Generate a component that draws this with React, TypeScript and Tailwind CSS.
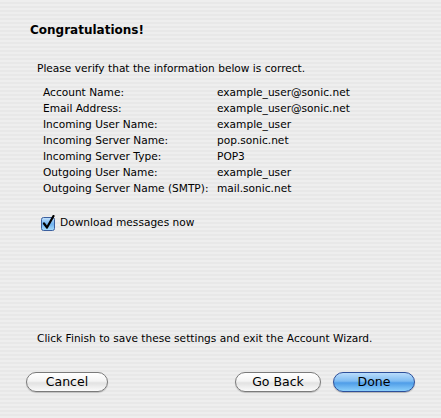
const rows = [
  ["Account Name:", "example_user@sonic.net"],
  ["Email Address:", "example_user@sonic.net"],
  ["Incoming User Name:", "example_user"],
  ["Incoming Server Name:", "pop.sonic.net"],
  ["Incoming Server Type:", "POP3"],
  ["Outgoing User Name:", "example_user"],
  ["Outgoing Server Name (SMTP):", "mail.sonic.net"],
];

function AquaButton({ label, primary, width }: { label: string; primary?: boolean; width: string }) {
  return (
    <button
      className={
        primary
          ? `${width} h-[20px] rounded-full border border-[#2d4f9a] bg-[linear-gradient(180deg,#b9dcfb_0%,#7fbcf2_45%,#4f9de8_55%,#8cd0fb_100%)] text-[12.5px] text-black shadow-[0_1px_1px_rgba(0,0,0,0.25)]`
          : `${width} h-[20px] rounded-full border border-[#7a7a7a] bg-[linear-gradient(180deg,#ffffff_0%,#f4f4f4_45%,#e2e2e2_55%,#fbfbfb_100%)] text-[12.5px] text-black shadow-[0_1px_1px_rgba(0,0,0,0.2)]`
      }
    >
      {label}
    </button>
  );
}

export default function App() {
  return (
    <div className="flex h-[418px] w-[441px] flex-col bg-[repeating-linear-gradient(180deg,#eeeeee_0px,#eeeeee_2px,#e8e8e8_2px,#e8e8e8_4px)] font-['DejaVu_Sans',sans-serif] text-[10.6px] text-black">
      <h1 className="ml-[30px] mt-[21px] text-[12px] font-bold leading-[18px]">Congratulations!</h1>

      <p className="ml-[37px] mt-[22px] leading-[14px]">Please verify that the information below is correct.</p>

      <div className="ml-[43px] mt-[9px] grid grid-cols-[174px_1fr]">
        {rows.map(([k, v]) => (
          <div key={k} className="contents">
            <span className="leading-[16px]">{k}</span>
            <span className="leading-[16px]">{v}</span>
          </div>
        ))}
      </div>

      <label className="ml-[41px] mt-[19px] flex items-center gap-[4px]">
        <svg width="15" height="16" viewBox="0 0 15 16">
          <defs>
            <linearGradient id="cb" x1="0" y1="0" x2="0" y2="1">
              <stop offset="0" stopColor="#c6e2fb" />
              <stop offset="0.5" stopColor="#6fb2ef" />
              <stop offset="1" stopColor="#a8dcfc" />
            </linearGradient>
          </defs>
          <rect x="0.5" y="2.5" width="13" height="13" rx="2" fill="url(#cb)" stroke="#3b5f9e" />
          <path d="M3 8.5 L6 12.5 L12.5 1" fill="none" stroke="#000" strokeWidth="2.2" strokeLinecap="round" strokeLinejoin="round" />
        </svg>
        <span>Download messages now</span>
      </label>

      <p className="ml-[37px] mt-[100px] leading-[14px]">Click Finish to save these settings and exit the Account Wizard.</p>

      <div className="mt-[27px] flex items-center px-[26px]">
        <AquaButton label="Cancel" width="w-[82px]" />
        <div className="ml-auto flex gap-[12px]">
          <AquaButton label="Go Back" width="w-[86px]" />
          <AquaButton label="Done" width="w-[82px]" primary />
        </div>
      </div>
    </div>
  );
}
